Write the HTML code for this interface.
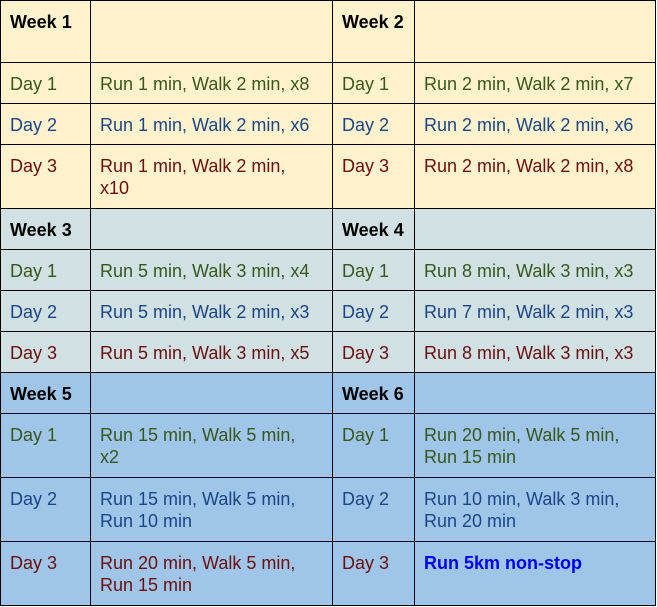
<!DOCTYPE html>
<html><head><meta charset="utf-8"><style>
html,body{margin:0;padding:0;background:#fff;}
table{border-collapse:collapse;table-layout:fixed;font-family:"Liberation Sans",Arial,sans-serif;font-size:18px;position:absolute;left:0;top:0;}
td{border:1px solid #000;vertical-align:top;padding:10px 9px 0 9px;line-height:22px;box-sizing:border-box;overflow:hidden;white-space:nowrap;}
.y td{background:#fff2cc}.g td{background:#d0e0e3}.b td{background:#9fc5e8}
.h td{font-weight:bold;color:#000;font-size:18px}
.d1{color:#38571d}.d2{color:#1c4587}.d3{color:#6b0f0f}
.bl{color:#0000ff;font-weight:bold}
</style></head><body>
<table>
<colgroup><col style="width:90px"><col style="width:242px"><col style="width:82px"><col style="width:241px"></colgroup>
<tr class="y h" style="height:62px"><td>Week 1</td><td></td><td>Week 2</td><td></td></tr>
<tr class="y d1" style="height:41px"><td>Day 1</td><td>Run 1 min, Walk 2 min, x8</td><td>Day 1</td><td>Run 2 min, Walk 2 min, x7</td></tr>
<tr class="y d2" style="height:41px"><td>Day 2</td><td>Run 1 min, Walk 2 min, x6</td><td>Day 2</td><td>Run 2 min, Walk 2 min, x6</td></tr>
<tr class="y d3" style="height:64px"><td>Day 3</td><td>Run 1 min, Walk 2 min,<br>x10</td><td>Day 3</td><td>Run 2 min, Walk 2 min, x8</td></tr>
<tr class="g h" style="height:41px"><td>Week 3</td><td></td><td>Week 4</td><td></td></tr>
<tr class="g d1" style="height:41px"><td>Day 1</td><td>Run 5 min, Walk 3 min, x4</td><td>Day 1</td><td>Run 8 min, Walk 3 min, x3</td></tr>
<tr class="g d2" style="height:41px"><td>Day 2</td><td>Run 5 min, Walk 2 min, x3</td><td>Day 2</td><td>Run 7 min, Walk 2 min, x3</td></tr>
<tr class="g d3" style="height:41px"><td>Day 3</td><td>Run 5 min, Walk 3 min, x5</td><td>Day 3</td><td>Run 8 min, Walk 3 min, x3</td></tr>
<tr class="b h" style="height:41px"><td>Week 5</td><td></td><td>Week 6</td><td></td></tr>
<tr class="b d1" style="height:64px"><td>Day 1</td><td>Run 15 min, Walk 5 min,<br>x2</td><td>Day 1</td><td>Run 20 min, Walk 5 min,<br>Run 15 min</td></tr>
<tr class="b d2" style="height:64px"><td>Day 2</td><td>Run 15 min, Walk 5 min,<br>Run 10 min</td><td>Day 2</td><td>Run 10 min, Walk 3 min,<br>Run 20 min</td></tr>
<tr class="b d3" style="height:64px"><td>Day 3</td><td>Run 20 min, Walk 5 min,<br>Run 15 min</td><td>Day 3</td><td class="bl">Run 5km non-stop</td></tr>
</table>
</body></html>
